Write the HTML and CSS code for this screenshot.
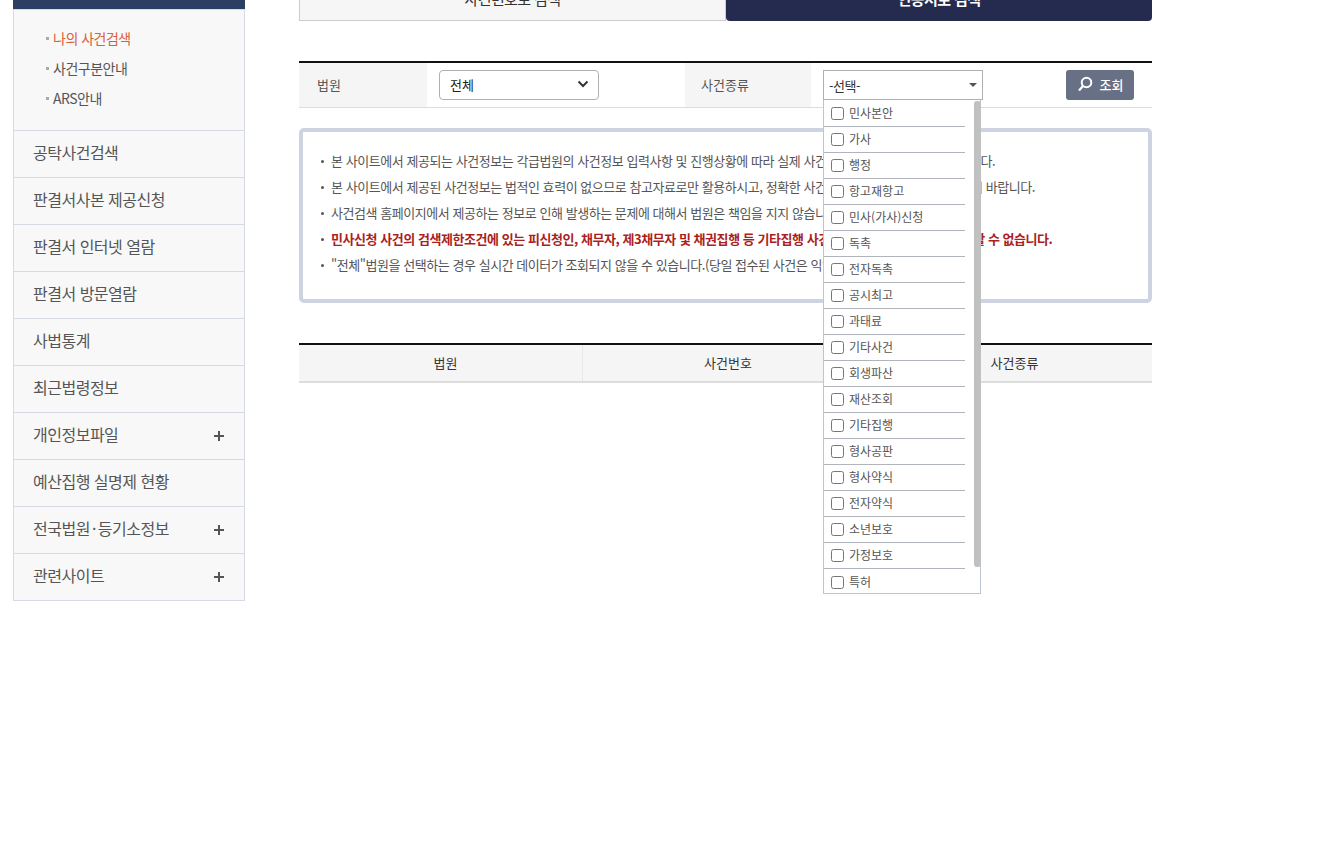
FILE: index.html
```html
<!DOCTYPE html>
<html lang="ko">
<head>
    <meta charset="UTF-8">
    <title>나의 사건검색</title>
    <link rel="stylesheet" href="styles.css">
</head>
<body>

<div class="page">
    <aside class="side">
        <div class="side-title"></div>
        <ul class="sub-menu">
            <li class="on">나의 사건검색</li>
            <li>사건구분안내</li>
            <li>ARS안내</li>
        </ul>
        <ul class="menu">
            <li>공탁사건검색</li>
            <li>판결서사본 제공신청</li>
            <li>판결서 인터넷 열람</li>
            <li>판결서 방문열람</li>
            <li>사법통계</li>
            <li>최근법령정보</li>
            <li class="more">개인정보파일</li>
            <li>예산집행 실명제 현황</li>
            <li class="more">전국법원<span class="dot">·</span>등기소정보</li>
            <li class="more">관련사이트</li>
        </ul>
    </aside>

    <main class="content">
        <div class="tabs">
            <div class="tab">사건번호로 검색</div>
            <div class="tab active">인증서로 검색</div>
        </div>

        <div class="search-row">
            <div class="label label-court">법원</div>
            <div class="field field-court">
                <div class="court-select">
                    <span>전체</span>
                    <svg width="12" height="8" viewBox="0 0 12 8"><path d="M1.5 1.5 6 6l4.5-4.5" fill="none" stroke="#333" stroke-width="2"/></svg>
                </div>
            </div>
            <div class="label label-type">사건종류</div>
            <div class="field field-type">
                <div class="multi">
                    <div class="multi-btn">
                        <span>-선택-</span>
                        <i class="caret"></i>
                    </div>
                    <ul class="multi-list">
                        <li><input type="checkbox">민사본안</li>
                        <li><input type="checkbox">가사</li>
                        <li><input type="checkbox">행정</li>
                        <li><input type="checkbox">항고재항고</li>
                        <li><input type="checkbox">민사(가사)신청</li>
                        <li><input type="checkbox">독촉</li>
                        <li><input type="checkbox">전자독촉</li>
                        <li><input type="checkbox">공시최고</li>
                        <li><input type="checkbox">과태료</li>
                        <li><input type="checkbox">기타사건</li>
                        <li><input type="checkbox">회생파산</li>
                        <li><input type="checkbox">재산조회</li>
                        <li><input type="checkbox">기타집행</li>
                        <li><input type="checkbox">형사공판</li>
                        <li><input type="checkbox">형사약식</li>
                        <li><input type="checkbox">전자약식</li>
                        <li><input type="checkbox">소년보호</li>
                        <li><input type="checkbox">가정보호</li>
                        <li><input type="checkbox">특허</li>
                    </ul>
                    <div class="multi-thumb"></div>
                </div>
                <button class="search-btn" type="button">
                    <svg width="16" height="16" viewBox="0 0 16 16"><circle cx="9.5" cy="6.5" r="4.8" fill="none" stroke="#fff" stroke-width="2"/><path d="M6 10 2 14.5" fill="none" stroke="#fff" stroke-width="2.2"/></svg>
                    조회
                </button>
            </div>
        </div>

        <div class="notice">
            <ul>
                <li>본 사이트에서 제공되는 사건정보는 각급법원의 사건정보 입력사항 및 진행상황에 따라 실제 사건 진행과 차이가 있을 수 있습니다.</li>
                <li>본 사이트에서 제공된 사건정보는 법적인 효력이 없으므로 참고자료로만 활용하시고, 정확한 사건내용은 해당법원에 확인하시기 바랍니다.</li>
                <li>사건검색 홈페이지에서 제공하는 정보로 인해 발생하는 문제에 대해서 법원은 책임을 지지 않습니다.</li>
                <li class="warn">민사신청 사건의 검색제한조건에 있는 피신청인, 채무자, 제3채무자 및 채권집행 등 기타집행 사건의 제3채무자는 사건을 검색할 수 없습니다.</li>
                <li>"전체"법원을 선택하는 경우 실시간 데이터가 조회되지 않을 수 있습니다.(당일 접수된 사건은 익일 조회 가능합니다.)</li>
            </ul>
        </div>

        <div class="result-head">
            <div class="col col-court">법원</div>
            <div class="col col-no">사건번호</div>
            <div class="col col-type">사건종류</div>
        </div>
    </main>
</div>

</body>
</html>
```

FILE: styles.css
```css
html, body {
    margin: 0;
    padding: 0;
    height: 100%;
    overflow: hidden;
    background: #fff;
}
body {
    font-family: "Noto Sans CJK KR", "Noto Sans", sans-serif;
    color: #333;
}
ul {
    list-style: none;
    margin: 0;
    padding: 0;
}

/* the page is photographed scrolled down a little */
.page {
    display: flex;
    align-items: flex-start;
    gap: 54px;
    margin-top: -23px;
    padding-left: 13px;
}

/* left menu */
.side {
    width: 232px;
    flex: none;
    box-sizing: border-box;
    border: 1px solid #d6dae4;
    border-top: 0;
    background: #f8f8f8;
}
.side-title {
    height: 32px;
    margin: 0 -1px;
    background: #2b3f63;
}
.sub-menu {
    padding: 13px 0 0 31px;
    border-top: 1px solid #d6dae4;
    height: 121px;
    box-sizing: border-box;
}
.sub-menu li {
    position: relative;
    height: 30px;
    line-height: 31px;
    padding-left: 8px;
    font-size: 14px;
    letter-spacing: -0.5px;
    color: #555;
}
.sub-menu li:before {
    content: "";
    position: absolute;
    left: 1px;
    top: 14px;
    width: 3px;
    height: 3px;
    background: #aaa;
}
.sub-menu li.on {
    color: #d9603a;
}
.menu li {
    position: relative;
    height: 47px;
    box-sizing: border-box;
    border-top: 1px solid #d6dae4;
    line-height: 42px;
    padding-left: 19px;
    font-size: 16px;
    letter-spacing: -0.5px;
    color: #555;
}
.menu li .dot {
    padding: 0 2px;
}
.menu li.more:before,
.menu li.more:after {
    content: "";
    position: absolute;
    background: #555;
}
.menu li.more:before {
    left: 200px;
    top: 22px;
    width: 10px;
    height: 2px;
}
.menu li.more:after {
    left: 204px;
    top: 18px;
    width: 2px;
    height: 10px;
}

/* right content */
.content {
    width: 853px;
    flex: none;
}
.tabs {
    display: flex;
    height: 44px;
    margin-bottom: 40px;
}
.tab {
    width: 427px;
    box-sizing: border-box;
    border: 1px solid #ccc;
    border-top: 0;
    background: #f6f6f6;
    text-align: center;
    line-height: 44px;
    font-size: 15px;
    letter-spacing: -0.6px;
    color: #333;
}
.tab.active {
    width: 426px;
    border: 0;
    border-radius: 0 0 4px 4px;
    background: #252b4e;
    color: #fff;
    font-weight: 700;
}

.search-row {
    display: flex;
    height: 47px;
    box-sizing: border-box;
    border-top: 2px solid #111;
    border-bottom: 1px solid #ddd;
    font-size: 13px;
}
.label {
    background: #f5f5f5;
    line-height: 43px;
    color: #555;
}
.label-court {
    width: 128px;
    padding-left: 18px;
    box-sizing: border-box;
}
.field-court {
    width: 258px;
    padding: 7px 0 0 12px;
    box-sizing: border-box;
}
.label-type {
    width: 126px;
    padding-left: 16px;
    box-sizing: border-box;
}
.field-type {
    flex: 1;
    display: flex;
    justify-content: space-between;
    padding: 7px 18px 0 12px;
}
.court-select {
    display: flex;
    align-items: center;
    justify-content: space-between;
    width: 160px;
    height: 30px;
    box-sizing: border-box;
    padding: 0 9px 2px 10px;
    border: 1px solid #b0b0b0;
    border-radius: 4px;
    color: #222;
}
.multi {
    position: relative;
    width: 160px;
}
.multi-btn {
    display: flex;
    align-items: center;
    justify-content: space-between;
    height: 30px;
    box-sizing: border-box;
    padding: 0 5px;
    border: 1px solid #b0b0b0;
    letter-spacing: -0.5px;
    color: #333;
    background: #fff;
}
.caret {
    width: 0;
    height: 0;
    border: 4px solid transparent;
    border-top: 4px solid #555;
    border-bottom: 0;
}
.multi-list {
    position: absolute;
    left: 0;
    top: 30px;
    z-index: 5;
    width: 158px;
    height: 494px;
    box-sizing: border-box;
    padding-top: 1px;
    overflow: hidden;
    border: 1px solid #bcc5d2;
    border-top: 0;
    background: #fff;
}
.multi-thumb {
    position: absolute;
    left: 151px;
    top: 31px;
    z-index: 6;
    width: 7px;
    height: 466px;
    border-radius: 3px;
    background: #c1c1c1;
}
.multi-list li {
    display: flex;
    align-items: center;
    width: 141px;
    height: 26px;
    box-sizing: border-box;
    padding-bottom: 2px;
    border-bottom: 1px solid #b0b5bb;
    font-size: 12px;
    color: #555;
}
.multi-list li:last-child {
    border-bottom: 0;
}
.multi-list input {
    width: 13px;
    height: 13px;
    margin: 2px 5px 0 7px;
}
.search-btn {
    display: flex;
    align-items: center;
    justify-content: center;
    gap: 7px;
    width: 68px;
    height: 30px;
    padding: 0 0 2px;
    border: 0;
    border-radius: 3px;
    background: #687085;
    color: #fff;
    font-family: inherit;
    font-size: 13px;
    font-weight: 500;
}

.notice {
    height: 175px;
    box-sizing: border-box;
    margin-top: 20px;
    padding: 16px 16px 0 18px;
    border: 4px solid #cdd3e0;
    border-radius: 5px;
}
.notice li {
    position: relative;
    height: 26px;
    line-height: 26px;
    padding-left: 10px;
    font-size: 13px;
    letter-spacing: -0.45px;
    color: #555;
    white-space: nowrap;
}
.notice li:before {
    content: "";
    position: absolute;
    left: 0;
    top: 12px;
    width: 3px;
    height: 3px;
    border-radius: 50%;
    background: #555;
}
.notice li.warn {
    color: #ab1f1f;
    font-weight: 700;
}

.result-head {
    display: flex;
    height: 40px;
    box-sizing: border-box;
    margin-top: 40px;
    border-top: 2px solid #111;
    border-bottom: 2px solid #ddd;
    background: #f5f5f5;
    font-size: 13px;
    line-height: 35px;
    text-align: center;
    color: #333;
}
.col-court {
    width: 284px;
    padding-left: 10px;
    box-sizing: border-box;
    border-right: 1px solid #e8e8e8;
}
.col-no {
    width: 290px;
}
.col-type {
    flex: 1;
    padding-left: 4px;
}
```
